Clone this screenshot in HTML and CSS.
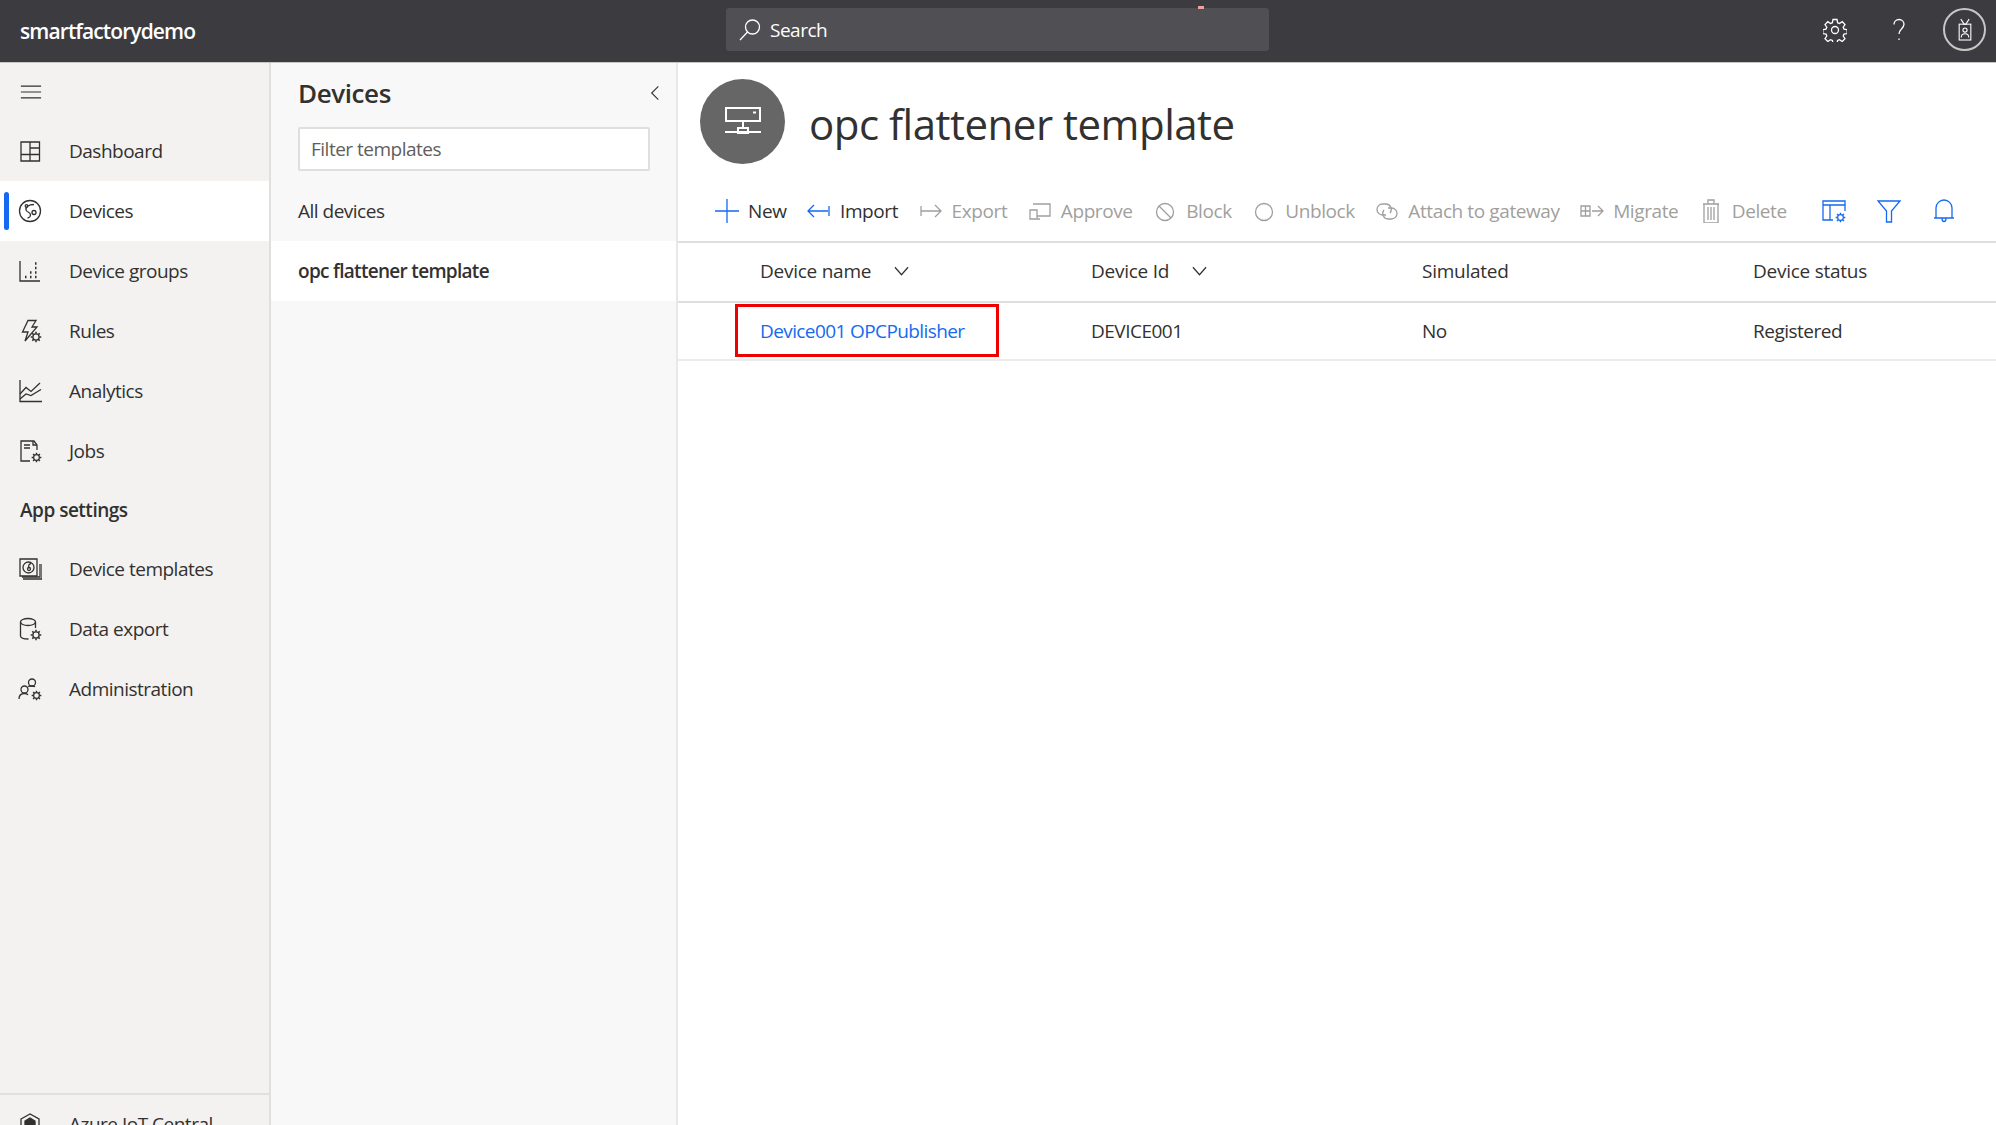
FILE: index.html
```html
<!DOCTYPE html>
<html lang="en">
<head>
  <meta charset="UTF-8">
  <title>opc flattener template - smartfactorydemo</title>
  <link rel="stylesheet" href="styles.css">
</head>
<body>

  <svg class="defs" width="0" height="0">
    <symbol id="cog" viewBox="0 0 10 10">
      <circle cx="5" cy="5" r="2.600" fill="none" stroke="currentColor" stroke-width="1.100"/>
      <path d="M5 .6v1.600M5 7.800v1.600M.6 5h1.600M7.800 5h1.600M1.900 1.900l1.100 1.100M7 7l1.100 1.100M8.100 1.900L7 3M3 7L1.900 8.100" stroke="currentColor" stroke-width="1.300" fill="none"/>
    </symbol>
  </svg>

  <header class="topbar">
    <div class="brand">smartfactorydemo</div>
    <div class="search">
      <svg class="ico" viewBox="0 0 24 24"><circle cx="14.500" cy="9" r="7"/><path d="M9.500 14L2 22"/></svg>
      <span>Search</span>
      <i class="search-mark"></i>
    </div>
    <div class="top-actions">
      <svg class="ico top-gear" viewBox="0 0 24 24"><circle cx="12" cy="12" r="3.500"/><path d="M10 1.500h4l.6 3.200 1.900.8 2.700-1.800 2.800 2.800-1.800 2.700.8 1.900 3.200.6v3.800l-3.200.6-.8 1.900 1.800 2.700-2.800 2.800-2.700-1.800-1.900.8-.6 3.200h-4l-.6-3.200-1.900-.8-2.700 1.800-2.800-2.800 1.800-2.700-.8-1.900-3.200-.6v-3.800l3.200-.6.8-1.900-1.800-2.700 2.800-2.800 2.700 1.800 1.900-.8z"/></svg>
      <svg class="ico top-help" viewBox="0 0 16 24"><path d="M3 6.500C3 3.500 5.200 1.500 8 1.500s5 2 5 4.800c0 4.200-5 4.700-5 9.700"/><path d="M8 20.500v1.500"/></svg>
      <div class="avatar">
        <svg class="ico" viewBox="0 0 24 28"><rect x="5" y="7" width="14" height="19"/><path d="M7 1l4 6M17 1l-4 6M10 7h4"/><circle cx="12" cy="14" r="2.500"/><path d="M7.500 23c0-6 9-6 9 0"/></svg>
      </div>
    </div>
  </header>

  <div class="app">
    <nav class="nav">
      <div class="nav-toggle">
        <svg class="ico" viewBox="0 0 24 24"><path d="M1 5.500h22M1 12h22M1 18.500h22"/></svg>
      </div>
      <a class="nav-item">
        <svg class="ico" viewBox="0 0 24 24"><path d="M3 3h18.500v19H3zM12 3v19M3 15.500h18.500M12 9h9.500"/></svg>
        Dashboard
      </a>
      <a class="nav-item active">
        <svg class="ico" viewBox="0 0 24 24"><circle cx="12" cy="12" r="10.500"/><path d="M16 5.500c-5 0-8.500 2-8 5.500.4 2.500 4.500 1.500 4.500 5 0 1.500-1.500 3-3 3"/><circle cx="16" cy="13.500" r="2"/><circle cx="8.500" cy="7" r="1.300"/></svg>
        Devices
      </a>
      <a class="nav-item">
        <svg class="ico" viewBox="0 0 24 24"><path d="M2 2v20h20"/><path class="dots" d="M7 18h1.500M12 18h1.500M17 18h1.500M12 13.500h1.500M17 13.500h1.500M17 9h1.500M17 4.500h1.500"/></svg>
        Device groups
      </a>
      <a class="nav-item">
        <svg class="ico" viewBox="0 0 24 24"><path d="M10 1.500h8l-4 6.500h5L7 22l3-9H4.500z"/><use href="#cog" x="12" y="12" width="12" height="12"/></svg>
        Rules
      </a>
      <a class="nav-item">
        <svg class="ico" viewBox="0 0 24 24"><path d="M2 1v21.500h22"/><path d="M2 15l6-6.500 5 4L22 4"/><path d="M2 20l6-5 5 1.500 10-6"/></svg>
        Analytics
      </a>
      <a class="nav-item">
        <svg class="ico" viewBox="0 0 24 24"><path d="M12 22H3V2h13l3 4v5"/><path d="M6 6h6M6 9h6M15 2v4h4"/><use href="#cog" x="13" y="13" width="11" height="11"/></svg>
        Jobs
      </a>
      <div class="nav-heading">App settings</div>
      <a class="nav-item">
        <svg class="ico" viewBox="0 0 24 24"><path d="M2 2h17v17H2z"/><path d="M5 22h19V7M22 7v13H4"/><circle cx="10.500" cy="10.500" r="5.500"/><circle cx="11" cy="12" r="1.500"/><path d="M13 6.500c-2 .5-3 2-2 4"/></svg>
        Device templates
      </a>
      <a class="nav-item">
        <svg class="ico" viewBox="0 0 24 24"><ellipse cx="10" cy="5" rx="7.500" ry="3.500"/><path d="M2.500 5v14c0 2 2.500 3 8 3M17.500 5v6"/><use href="#cog" x="12" y="12" width="12" height="12"/></svg>
        Data export
      </a>
      <a class="nav-item">
        <svg class="ico" viewBox="0 0 24 24"><circle cx="14" cy="5.500" r="3.500"/><circle cx="6.500" cy="12.500" r="3.500"/><path d="M1 22c0-3.500 2-5.500 5.500-5.500 1.500 0 3 .5 3.500 1.500M10 9.500c1-.5 6-1 7 .5"/><use href="#cog" x="13" y="13" width="11" height="11"/></svg>
        Administration
      </a>
      <a class="nav-item nav-footer">
        <svg class="ico" viewBox="0 0 24 24"><path d="M3 7l9-5 9 5v11l-9 5-9-5z"/><path class="solid" d="M7 9l5-3 5 3v7l-5 3-5-3z"/></svg>
        Azure IoT Central
      </a>
    </nav>

    <aside class="panel">
      <div class="panel-head">
        <h2>Devices</h2>
        <svg class="ico panel-collapse" viewBox="0 0 12 20"><path d="M10 2L2 10l8 8"/></svg>
      </div>
      <div class="filter">Filter templates</div>
      <a class="panel-row">All devices</a>
      <a class="panel-row selected">opc flattener template</a>
    </aside>

    <main class="main">
      <div class="title-row">
        <div class="title-icon">
          <svg class="ico" viewBox="0 0 36 28"><rect x="1" y="1" width="34" height="13"/><path d="M28 5.500h3"/><path d="M18 14v6M13 21h10v5H13zM0 25h36"/></svg>
        </div>
        <h1>opc flattener template</h1>
      </div>

      <div class="toolbar">
        <button class="tool">
          <svg class="ico" viewBox="0 0 24 24"><path d="M12 0v24M0 12h24"/></svg>New
        </button>
        <button class="tool">
          <svg class="ico" viewBox="0 0 24 24"><path d="M1 12h20M7 6l-6 6 6 6M22 7v10"/></svg>Import
        </button>
        <button class="tool off">
          <svg class="ico" viewBox="0 0 24 24"><path d="M2 7v10M2 12h20M16 6l6 6-6 6"/></svg>Export
        </button>
        <button class="tool off">
          <svg class="ico" viewBox="0 0 24 24"><path d="M5 5h17v12H9M2 11h7v9H2zM2 20h10"/></svg>Approve
        </button>
        <button class="tool off">
          <svg class="ico" viewBox="0 0 24 24"><circle cx="12" cy="13" r="8.500"/><path d="M6 7l12 12"/></svg>Block
        </button>
        <button class="tool off">
          <svg class="ico" viewBox="0 0 24 24"><circle cx="12" cy="13" r="8.500"/></svg>Unblock
        </button>
        <button class="tool off">
          <svg class="ico" viewBox="0 0 24 24"><path d="M11 16H7.500a5.500 5.500 0 0 1 0-11H11a5.500 5.500 0 0 1 4 9"/><path d="M13 9h3.500a5.500 5.500 0 0 1 0 11H13a5.500 5.500 0 0 1-4-9"/></svg>Attach to gateway
        </button>
        <button class="tool off">
          <svg class="ico" viewBox="0 0 24 24"><path d="M1 7h9v10H1zM5.500 7v10M1 12h9M12 12h11M18 7l5 5-5 5"/></svg>Migrate
        </button>
        <button class="tool off">
          <svg class="ico" viewBox="0 0 24 24"><path d="M4 5h16M9 5V1h6v4M5 5v19h14V5M9 8v13M12 8v13M15 8v13"/></svg>Delete
        </button>
        <div class="tool-icons">
          <svg class="ico" viewBox="0 0 24 24"><path d="M1 2h22v4H1zM1 6v15h10M8 6v15M23 6v6"/><use href="#cog" x="13" y="13" width="11" height="11"/></svg>
          <svg class="ico" viewBox="0 0 24 24"><path d="M1 2h22l-8.500 10v11h-5V12z"/></svg>
          <svg class="ico" viewBox="0 0 24 24"><path d="M4 19V9a8 8 0 0 1 16 0v10zM2 19h20M10 19.500a2 3 0 0 0 4 0"/></svg>
        </div>
      </div>

      <div class="grid grid-head">
        <div class="cell">Device name <svg class="ico chev" viewBox="0 0 16 10"><path d="M1 1l7 8 7-8"/></svg></div>
        <div class="cell">Device Id <svg class="ico chev" viewBox="0 0 16 10"><path d="M1 1l7 8 7-8"/></svg></div>
        <div class="cell">Simulated</div>
        <div class="cell">Device status</div>
      </div>
      <div class="grid grid-row">
        <div class="cell name-cell">
          <a class="link">Device001 OPCPublisher</a>
          <span class="callout"></span>
        </div>
        <div class="cell">DEVICE001</div>
        <div class="cell">No</div>
        <div class="cell">Registered</div>
      </div>
    </main>
  </div>

</body>
</html>
```

FILE: styles.css
```css
* {
  box-sizing: border-box;
}

body {
  margin: 0;
  height: 1125px;
  overflow: hidden;
  background-color: #fff;
  color: #323130;
  font-family: "Open Sans", "Noto Sans", sans-serif;
  font-size: 19px;
  letter-spacing: -0.5px;
}

.defs {
  position: absolute;
}

.ico {
  display: block;
  flex: none;
  width: 24px;
  height: 24px;
  fill: none;
  stroke: currentColor;
  stroke-width: 1.3;
}

/* barra superior */
.topbar {
  position: relative;
  display: flex;
  align-items: center;
  height: 63px;
  padding-left: 20px;
  background-color: #3c3b40;
  border-bottom: 1px solid #c8c6c4;
  color: #fff;
}

.brand {
  width: 706px;
  font-size: 21px;
  font-weight: 600;
  letter-spacing: -0.9px;
}

.search {
  position: relative;
  display: flex;
  align-items: center;
  gap: 8px;
  width: 543px;
  height: 43px;
  margin-top: -3px;
  padding-left: 12px;
  background-color: #505054;
  border-radius: 3px;
}

.search-mark {
  position: absolute;
  top: -2px;
  left: 472px;
  width: 6px;
  height: 3px;
  background-color: #f0a0a0;
}

.top-actions {
  display: flex;
  align-items: center;
  margin-top: -3px;
  margin-left: auto;
  padding-right: 10px;
}

.top-help {
  width: 16px;
  margin-left: 44px;
  height: 24px;
}

.avatar {
  display: flex;
  align-items: center;
  justify-content: center;
  width: 43px;
  height: 43px;
  margin-left: 36px;
  border: 2px solid #c8c6c4;
  border-radius: 50%;
}

.avatar .ico {
  width: 20px;
  height: 24px;
}

/* layout */
.app {
  display: flex;
  height: 1090px;
}

.nav {
  display: flex;
  flex-direction: column;
  flex: none;
  width: 271px;
  background-color: #f3f2f1;
  border-right: 2px solid #e1dfdd;
}

.nav-toggle {
  display: flex;
  align-items: center;
  height: 58px;
  padding-left: 20px;
}

.nav-toggle .ico {
  width: 22px;
}

.nav-item,
.nav-heading {
  display: flex;
  align-items: center;
  flex: none;
  height: 60px;
  padding-left: 18px;
}

.nav-item {
  position: relative;
  gap: 27px;
}

.nav-heading {
  height: 58px;
  padding-left: 20px;
  font-weight: 600;
}

.nav-item.active {
  background-color: #fff;
  font-weight: 500;
}

.nav-item.active::before {
  content: "";
  position: absolute;
  left: 4px;
  top: 11px;
  width: 5px;
  height: 38px;
  background-color: #1469f0;
  border-radius: 3px;
}

.dots {
  stroke-width: 2.4;
}

.solid {
  fill: currentColor;
}

.nav-footer {
  margin-top: auto;
  border-top: 2px solid #e1dfdd;
}

/* panel de plantillas */
.panel {
  flex: none;
  width: 407px;
  background-color: #f8f8f8;
  border-right: 2px solid #e8e8e8;
}

.panel-head {
  display: flex;
  align-items: center;
  justify-content: space-between;
  height: 64px;
  padding: 0 16px 5px 27px;
}

.panel-head h2 {
  margin: 0;
  font-size: 26px;
  font-weight: 600;
  letter-spacing: -0.4px;
}

.panel-collapse {
  width: 10px;
  height: 18px;
}

.filter {
  display: flex;
  align-items: center;
  height: 44px;
  margin: 0 26px 0 27px;
  padding-left: 11px;
  background-color: #fff;
  border: 2px solid #e1dfdd;
  border-radius: 2px;
  color: #605e5c;
}

.panel-row {
  display: flex;
  align-items: center;
  height: 60px;
  margin-top: 10px;
  padding-left: 27px;
}

.panel-row.selected {
  margin-top: 0;
  background-color: #fff;
  font-weight: 600;
  letter-spacing: -0.7px;
}

/* contenido */
.main {
  flex: 1;
  min-width: 0;
}

.title-row {
  display: flex;
  align-items: center;
  gap: 24px;
  height: 118px;
  padding: 0 0 2px 22px;
}

.title-icon {
  display: flex;
  align-items: center;
  justify-content: center;
  width: 85px;
  height: 85px;
  background-color: #666;
  border-radius: 50%;
  color: #fff;
}

.title-icon .ico {
  width: 36px;
  height: 28px;
  stroke-width: 2;
}

.title-row h1 {
  margin: 5px 0 0;
  font-size: 42px;
  font-weight: 400;
  letter-spacing: -0.5px;
}

.toolbar {
  display: flex;
  align-items: center;
  gap: 20.5px;
  height: 60px;
  padding-left: 37px;
  letter-spacing: -0.4px;
}

.tool {
  display: flex;
  align-items: center;
  gap: 9px;
  padding: 0;
  border: 0;
  background: none;
  color: #323130;
  font: inherit;
  letter-spacing: inherit;
  white-space: nowrap;
}

.tool .ico {
  color: #1469f0;
}

.tool.off,
.tool.off .ico {
  color: #a19f9d;
}

.tool-icons {
  display: flex;
  gap: 31px;
  margin-left: auto;
  padding-right: 40px;
  color: #1469f0;
}

.grid {
  display: grid;
  grid-template-columns: repeat(4, 331px);
  align-items: center;
  height: 60px;
  padding-left: 82px;
  border-top: 2px solid #e1dfdd;
}

.grid-head {
  padding-bottom: 2px;
  font-weight: 500;
  letter-spacing: -0.25px;
}

.grid-row {
  border-bottom: 2px solid #edebe9;
}

.cell {
  display: flex;
  align-items: center;
}

.chev {
  width: 15px;
  height: 10px;
  margin-left: 23px;
}

.name-cell {
  position: relative;
}

.link {
  color: #1469f0;
  letter-spacing: -0.6px;
}

.callout {
  position: absolute;
  top: -14px;
  left: -25px;
  width: 264px;
  height: 53px;
  border: 3px solid #ee0000;
}
```
